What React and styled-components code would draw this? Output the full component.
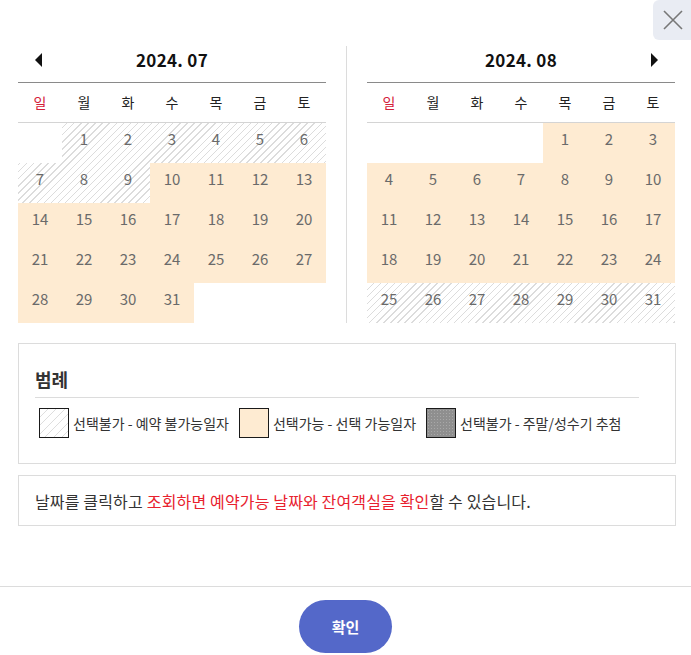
import styled, { createGlobalStyle } from "styled-components";

const GlobalStyle = createGlobalStyle`
  body {
    margin: 0;
    background: #fff;
    font-family: "Noto Sans CJK KR", "Noto Sans", sans-serif;
  }
`;

const WEEKDAYS = ["일", "월", "화", "수", "목", "금", "토"];

// each cell: [day or null, kind]  kind: "none" | "off" | "on"
const july = [
  [null, "none"], [1, "off"], [2, "off"], [3, "off"], [4, "off"], [5, "off"], [6, "off"],
  [7, "off"], [8, "off"], [9, "off"], [10, "on"], [11, "on"], [12, "on"], [13, "on"],
  [14, "on"], [15, "on"], [16, "on"], [17, "on"], [18, "on"], [19, "on"], [20, "on"],
  [21, "on"], [22, "on"], [23, "on"], [24, "on"], [25, "on"], [26, "on"], [27, "on"],
  [28, "on"], [29, "on"], [30, "on"], [31, "on"], [null, "none"], [null, "none"], [null, "none"],
];

const august = [
  [null, "none"], [null, "none"], [null, "none"], [null, "none"], [1, "on"], [2, "on"], [3, "on"],
  [4, "on"], [5, "on"], [6, "on"], [7, "on"], [8, "on"], [9, "on"], [10, "on"],
  [11, "on"], [12, "on"], [13, "on"], [14, "on"], [15, "on"], [16, "on"], [17, "on"],
  [18, "on"], [19, "on"], [20, "on"], [21, "on"], [22, "on"], [23, "on"], [24, "on"],
  [25, "off"], [26, "off"], [27, "off"], [28, "off"], [29, "off"], [30, "off"], [31, "off"],
];

const hatch = `repeating-linear-gradient(135deg, #fff 0 4px, #dcdcdc 4px 5px)`;

export default function App() {
  return (
    <>
      <GlobalStyle />
      <Modal>
        <CloseButton aria-label="닫기">
          <svg width="20" height="20" viewBox="0 0 20 20">
            <path d="M1 1 L19 19 M19 1 L1 19" stroke="#777" strokeWidth="1.6" fill="none" />
          </svg>
        </CloseButton>
        <Body>
          <Calendars>
            <Month title="2024. 07" days={july} arrow="prev" />
            <Divider />
            <Month title="2024. 08" days={august} arrow="next" />
          </Calendars>

          <Legend>
            <LegendTitle>범례</LegendTitle>
            <LegendRow>
              <LegendItem>
                <Swatch $kind="off" />
                선택불가 - 예약 불가능일자
              </LegendItem>
              <LegendItem>
                <Swatch $kind="on" />
                선택가능 - 선택 가능일자
              </LegendItem>
              <LegendItem>
                <Swatch $kind="lottery" />
                선택불가 - 주말/성수기 추첨
              </LegendItem>
            </LegendRow>
          </Legend>

          <Info>
            날짜를 클릭하고 <Red>조회하면 예약가능 날짜와 잔여객실을 확인</Red>할 수 있습니다.
          </Info>
        </Body>
        <Footer>
          <ConfirmButton>확인</ConfirmButton>
        </Footer>
      </Modal>
    </>
  );
}

function Month({ title, days, arrow }) {
  return (
    <MonthBox>
      <MonthHeader>
        <ArrowSlot>
          {arrow === "prev" && (
            <svg width="8" height="14" viewBox="0 0 8 14">
              <polygon points="7,0 7,14 0,7" fill="#111" />
            </svg>
          )}
        </ArrowSlot>
        <MonthTitle>{title}</MonthTitle>
        <ArrowSlot>
          {arrow === "next" && (
            <svg width="8" height="14" viewBox="0 0 8 14">
              <polygon points="1,0 1,14 8,7" fill="#111" />
            </svg>
          )}
        </ArrowSlot>
      </MonthHeader>
      <WeekRow>
        {WEEKDAYS.map((w, i) => (
          <WeekDay key={w} $sunday={i === 0}>{w}</WeekDay>
        ))}
      </WeekRow>
      <DayGrid>
        {days.map(([d, kind], i) => (
          <DayCell key={i} $kind={kind}>{d}</DayCell>
        ))}
      </DayGrid>
    </MonthBox>
  );
}

const Modal = styled.div`
  position: relative;
  width: 691px;
  height: 655px;
  background: #fff;
  overflow: hidden;
`;

const CloseButton = styled.button`
  position: absolute;
  top: 0;
  right: 0;
  width: 38px;
  height: 40px;
  border: none;
  border-radius: 6px 0 0 6px;
  background: #e9ecf3;
  display: flex;
  align-items: center;
  justify-content: center;
  padding: 0 0 0 2px;
  cursor: pointer;
`;

const Body = styled.div`
  padding: 40px 15px 0 18px;
`;

const Calendars = styled.div`
  display: flex;
  gap: 20px;
`;

const Divider = styled.div`
  width: 1px;
  background: #dcdcdc;
  margin-top: 6px;
`;

const MonthBox = styled.div`
  width: 308px;
`;

const MonthHeader = styled.div`
  display: grid;
  grid-template-columns: 42px 1fr 42px;
  align-items: center;
  height: 43px;
  box-sizing: border-box;
  padding-bottom: 4px;
  border-bottom: 1px solid #8a8a8a;
`;

const ArrowSlot = styled.div`
  display: flex;
  justify-content: center;
  align-items: center;
  padding-top: 2px;
`;

const MonthTitle = styled.div`
  text-align: center;
  font-size: 17px;
  font-weight: 700;
  color: #111;
  letter-spacing: 0.3px;
`;

const WeekRow = styled.div`
  display: grid;
  grid-template-columns: repeat(7, 44px);
  height: 39px;
  border-bottom: 1px solid #d4d4d4;
`;

const WeekDay = styled.div`
  display: flex;
  align-items: center;
  justify-content: center;
  padding-bottom: 2px;
  font-size: 14px;
  color: ${(p) => (p.$sunday ? "#d4213a" : "#222")};
`;

const DayGrid = styled.div`
  display: grid;
  grid-template-columns: repeat(7, 44px);
  grid-auto-rows: 40px;
`;

const DayCell = styled.div`
  display: flex;
  justify-content: center;
  align-items: center;
  padding-bottom: 10px;
  box-sizing: border-box;
  font-size: 15px;
  color: #6a6a6a;
  background: ${(p) =>
    p.$kind === "on" ? "#feebd2" : p.$kind === "off" ? hatch : "transparent"};
  background-attachment: fixed;
`;

const Legend = styled.div`
  margin-top: 20px;
  border: 1px solid #dcdcdc;
  padding: 22px 36px 25px 16px;
`;

const LegendTitle = styled.div`
  font-size: 18px;
  font-weight: 700;
  color: #333;
  padding-bottom: 5px;
  border-bottom: 1px solid #dcdcdc;
`;

const LegendRow = styled.div`
  display: flex;
  gap: 10px;
  margin-top: 10px;
  padding-left: 4px;
`;

const LegendItem = styled.div`
  display: flex;
  align-items: center;
  gap: 4px;
  font-size: 14px;
  color: #333;
`;

const Swatch = styled.span`
  width: 28px;
  height: 28px;
  border: 1px solid #1a1a1a;
  background: ${(p) =>
    p.$kind === "on"
      ? "#feebd2"
      : p.$kind === "off"
      ? "repeating-linear-gradient(135deg, #fff 0 5px, #dedede 5px 6px)"
      : "radial-gradient(circle, #a8a8a8 0.8px, transparent 1px) 0 0 / 3px 3px, #8f8f8f"};
`;

const Info = styled.div`
  margin-top: 11px;
  border: 1px solid #dcdcdc;
  height: 49px;
  display: flex;
  align-items: center;
  padding-left: 16px;
  font-size: 16px;
  letter-spacing: 0.15px;
  color: #333;
`;

const Red = styled.span`
  color: #e8212e;
  margin-left: 4px;
`;

const Footer = styled.div`
  margin-top: 60px;
  border-top: 1px solid #dcdcdc;
  display: flex;
  justify-content: center;
  padding-top: 13px;
`;

const ConfirmButton = styled.button`
  width: 93px;
  height: 53px;
  border: none;
  border-radius: 27px;
  background: #5468c9;
  color: #fff;
  font-family: inherit;
  font-size: 15px;
  font-weight: 700;
  cursor: pointer;
`;
